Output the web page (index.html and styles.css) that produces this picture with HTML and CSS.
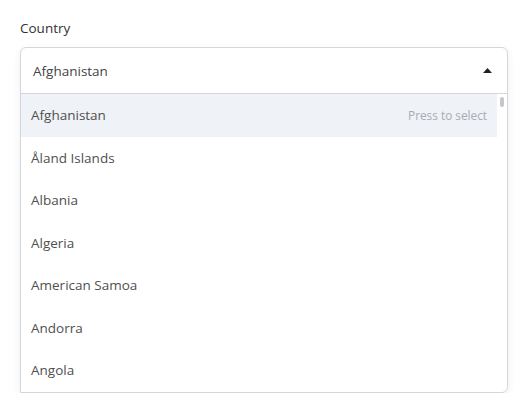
FILE: index.html
```html
<!DOCTYPE html>
<html>
<head>
<meta charset="utf-8">
<link rel="stylesheet" href="styles.css">
</head>
<body>
<div class="field">
  <label class="label">Country</label>
  <div class="select">
    <div class="control">
      <span class="value">Afghanistan</span>
      <svg class="caret" width="9" height="5" viewBox="0 0 9 5"><path d="M0 5 L4.5 0 L9 5 Z" fill="#222"/></svg>
    </div>
    <div class="menu">
      <ul class="list">
        <li class="option active"><span>Afghanistan</span><span class="hint">Press to select</span></li>
        <li class="option">Åland Islands</li>
        <li class="option">Albania</li>
        <li class="option">Algeria</li>
        <li class="option">American Samoa</li>
        <li class="option">Andorra</li>
        <li class="option">Angola</li>
      </ul>
      <div class="scrollbar"><div class="thumb"></div></div>
    </div>
  </div>
</div>
</body>
</html>
```
FILE: styles.css
```css
* { box-sizing: border-box; }
html, body { margin: 0; padding: 0; background: #fff; }
body {
  font-family: "Open Sans", "Liberation Sans", sans-serif;
  color: #3a3a3a;
  padding: 20px 19px 0 20px;
}
.field { display: flex; flex-direction: column; }
.label {
  font-size: 13.5px;
  color: #333;
  line-height: 16px;
  margin-bottom: 11px;
}
.select {
  border: 1px solid #d4d6db;
  border-radius: 6px 6px 6px 1px;
  box-shadow: 0 3px 8px rgba(60, 70, 100, 0.08);
  width: 488px;
}
.control {
  height: 46px;
  display: flex;
  align-items: center;
  justify-content: space-between;
  padding: 0 15px 0 12px;
  border-bottom: 1px solid #d4d6db;
  font-size: 13.5px;
  color: #444;
}
.caret { display: block; }
.menu {
  display: flex;
  height: 298px;
  overflow: hidden;
}
.list {
  list-style: none;
  margin: 0;
  padding: 0;
  flex: 1;
}
.option {
  height: 42.5px;
  display: flex;
  align-items: center;
  justify-content: space-between;
  padding: 0 10px;
  font-size: 13.5px;
  color: #4f4f4f;
}
.option.active { background: #eff2f7; }
.hint { font-size: 11.8px; color: #a9abb0; }
.scrollbar { width: 10px; padding: 3px 0 0 3px; }
.thumb { width: 4px; height: 10px; border-radius: 2px; background: #c4c6ca; }
```
